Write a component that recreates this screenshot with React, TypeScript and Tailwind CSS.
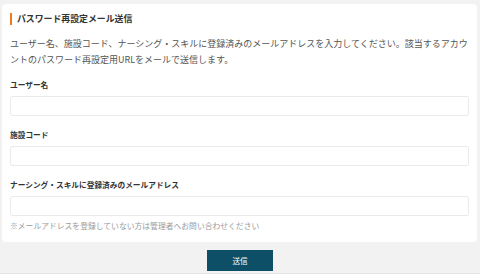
const font = { fontFamily: '"Noto Sans CJK JP", "Noto Sans", sans-serif' };

function Field({ label, className = "" }: { label: string; className?: string }) {
  return (
    <div className={className}>
      <div className="text-[7.7px] font-bold leading-[12px] text-[#333]">{label}</div>
      <div className="mt-[5px] h-[20px] rounded-[2px] border border-[#ebebeb] bg-white" />
    </div>
  );
}

export default function App() {
  return (
    <div
      className="h-[274px] w-[480px] overflow-hidden border-b border-[#e2e2e2] bg-[#f2f2f2] px-[2px] pt-[4px]"
      style={font}
    >
      <div className="w-[475px] rounded-[4px] bg-white px-[8px] pb-[10px] pt-[9px]">
        <div className="flex h-[12px] items-center gap-[5px]">
          <span className="h-[12px] w-[2px] bg-[#ed7a1c]" />
          <span className="text-[8.9px] font-bold leading-[12px] text-[#333]">
            パスワード再設定メール送信
          </span>
        </div>
        <p className="mt-[11px] text-[9px] leading-[16px] text-[#555]">
          ユーザー名、施設コード、ナーシング・スキルに登録済みのメールアドレスを入力してください。該当するアカウントのパスワード再設定用URLをメールで送信します。
        </p>
        <Field label="ユーザー名" className="mt-[11px]" />
        <Field label="施設コード" className="mt-[13px]" />
        <Field label="ナーシング・スキルに登録済みのメールアドレス" className="mt-[13px]" />
        <div className="mt-[4px] text-[7.8px] leading-[12px] text-[#9a9a9a]">
          ※メールアドレスを登録していない方は管理者へお問い合わせください
        </div>
      </div>
      <div className="mt-[8px] flex justify-center">
        <button className="h-[21px] w-[66px] bg-[#0d4f66] text-[7.6px] leading-[21px] text-white">
          送信
        </button>
      </div>
    </div>
  );
}
